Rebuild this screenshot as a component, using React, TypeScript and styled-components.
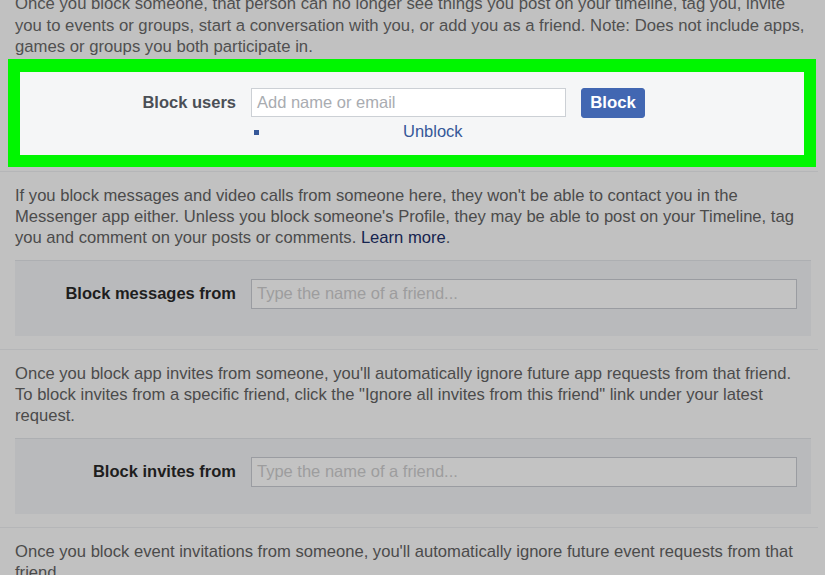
import React from "react";
import styled, { createGlobalStyle } from "styled-components";

const Global = createGlobalStyle`
  html, body { margin: 0; padding: 0; background: #c1c1c1; overflow: hidden; }
  body { font-family: "Liberation Sans", Arial, Helvetica, sans-serif; }
  * { box-sizing: border-box; }
`;

const Page = styled.div`
  width: 825px;
  height: 575px;
  overflow: hidden;
  background: #c1c1c1;
`;

const Intro = styled.div`
  margin: -7px 0 0;
  padding: 0 15px;
  font-size: 16.7px;
  line-height: 21.5px;
  color: #505050;
`;

const Line = styled.span`
  display: block;
  white-space: nowrap;
`;

const Highlight = styled.div`
  margin: 1px 9px 0 8px;
  border: 12px solid #00f600;
  border-top-width: 13px;
  background: #f5f6f7;
  height: 108px;
  padding: 16px 0 0;
`;

const FieldRow = styled.div<{ $labelCol: number; $inputW: number }>`
  display: grid;
  grid-template-columns: ${(p) => p.$labelCol}px ${(p) => p.$inputW}px auto;
  column-gap: 15px;
  align-items: center;
  justify-content: start;
`;

const Label = styled.div<{ $muted?: boolean }>`
  text-align: right;
  font-weight: bold;
  font-size: 16.5px;
  white-space: nowrap;
  color: ${(p) => (p.$muted ? "#4b4f56" : "#1e1e1e")};
`;

const Input = styled.div<{ $light?: boolean; $h: number }>`
  height: ${(p) => p.$h}px;
  border: 1px solid ${(p) => (p.$light ? "#ccd0d5" : "#9a9ca1")};
  background: ${(p) => (p.$light ? "#ffffff" : "#c3c3c3")};
  padding: 0 5px;
  display: flex;
  align-items: center;
  font-size: 16.5px;
  color: ${(p) => (p.$light ? "#a9acb1" : "#9d9d9e")};
`;

const BlockButton = styled.button`
  width: 64px;
  height: 30px;
  margin: 0;
  background: #4267b2;
  border: 1px solid #4267b2;
  border-radius: 3px;
  color: #fff;
  font-family: inherit;
  font-weight: bold;
  font-size: 16.8px;
  padding: 0;
`;

const BlockedRow = styled.div`
  display: flex;
  align-items: center;
  margin: 4px 0 0 234px;
  height: 20px;
`;

const Square = styled.span`
  width: 5px;
  height: 5px;
  background: #365899;
  margin-top: 2px;
`;

const Unblock = styled.a`
  margin-left: 144px;
  font-size: 16.5px;
  color: #365899;
  text-decoration: none;
`;

const Separator = styled.hr<{ $top: number }>`
  margin: ${(p) => p.$top}px 7px 0 0;
  border: 0;
  border-top: 1px solid #b5b6b8;
  height: 0;
`;

const Para = styled.div`
  margin: 13.5px 0 0;
  padding: 0 15px;
  font-size: 16.6px;
  line-height: 21px;
  color: #4b4b4b;
`;

const Learn = styled.a`
  color: #16244f;
  text-decoration: none;
`;

const GreyBox = styled.div`
  margin: 11.5px 14px 0 15px;
  height: 76px;
  background: #b9babc;
  border-top: 1px solid #adafb2;
  padding-top: 18px;
`;

const rows = [
  {
    lines: [
      <>If you block messages and video calls from someone here, they won't be able to contact you in the</>,
      <>Messenger app either. Unless you block someone's Profile, they may be able to post on your Timeline, tag</>,
      <>
        you and comment on your posts or comments. <Learn>Learn more</Learn>.
      </>,
    ],
    label: "Block messages from",
  },
  {
    lines: [
      <>Once you block app invites from someone, you'll automatically ignore future app requests from that friend.</>,
      <>To block invites from a specific friend, click the "Ignore all invites from this friend" link under your latest</>,
      <>request.</>,
    ],
    label: "Block invites from",
  },
];

export default function App() {
  return (
    <Page>
      <Global />
      <Intro>
        <Line>Once you block someone, that person can no longer see things you post on your timeline, tag you, invite</Line>
        <Line>you to events or groups, start a conversation with you, or add you as a friend. Note: Does not include apps,</Line>
        <Line>games or groups you both participate in.</Line>
      </Intro>
      <Highlight>
        <FieldRow $labelCol={216} $inputW={315}>
          <Label $muted>Block users</Label>
          <Input $light $h={29}>Add name or email</Input>
          <BlockButton>Block</BlockButton>
        </FieldRow>
        <BlockedRow>
          <Square />
          <Unblock>Unblock</Unblock>
        </BlockedRow>
      </Highlight>
      <Separator $top={4} />
      {rows.map((r) => (
        <React.Fragment key={r.label}>
          <Para>
            {r.lines.map((l, i) => (
              <Line key={i}>{l}</Line>
            ))}
          </Para>
          <GreyBox>
            <FieldRow $labelCol={221} $inputW={546}>
              <Label>{r.label}</Label>
              <Input $h={30}>Type the name of a friend...</Input>
            </FieldRow>
          </GreyBox>
          <Separator $top={13} />
        </React.Fragment>
      ))}
      <Para>
        <Line>Once you block event invitations from someone, you'll automatically ignore future event requests from that</Line>
        <Line>friend.</Line>
      </Para>
    </Page>
  );
}
